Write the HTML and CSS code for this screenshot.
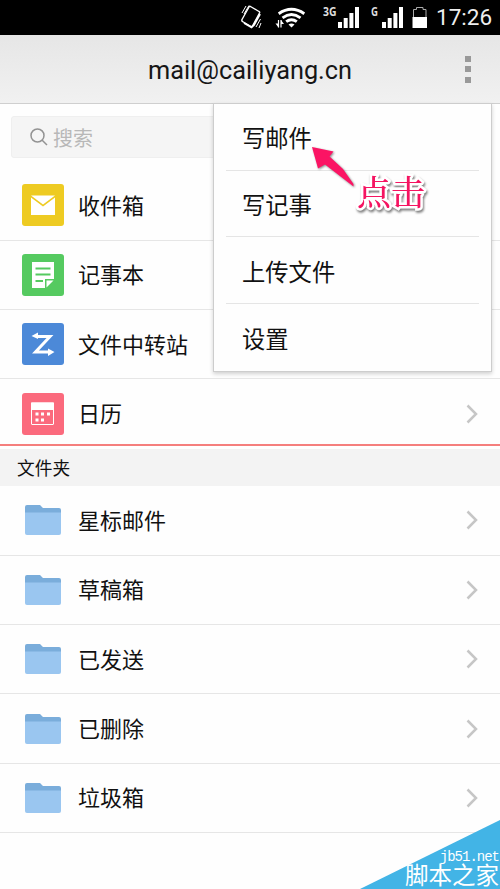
FILE: index.html
```html
<!DOCTYPE html>
<html lang="zh-CN">
<head>
<meta charset="utf-8">
<title>mail@cailiyang.cn</title>
<link rel="stylesheet" href="styles.css">
</head>
<body>
<svg class="defs" width="0" height="0" aria-hidden="true">
  <symbol id="folder" viewBox="0 0 36 30">
    <path d="M0 9V2Q0 0 2 0H15L18 3H34Q36 3 36 5V9Z" fill="#7aaddb"/>
    <path d="M0 7.5H36V28Q36 30 34 30H2Q0 30 0 28Z" fill="#9ac6f0"/>
  </symbol>
  <symbol id="chevron" viewBox="0 0 12 20"><path d="M1.5 1.5L10 10L1.5 18.5" fill="none" stroke="#c6c6c6" stroke-width="2.5"/></symbol>
</svg>
<div class="screen">
  <div class="status">
    <svg class="status-icons" width="200" height="35" viewBox="240 0 200 35">
      <g fill="none" stroke="#fff" stroke-width="1.4">
        <path d="M242 19.5L249 7Q249.500 6 250.500 6.500L259 11.500Q260 12 259.500 13L252.500 26Q252 27 251 26.500L242.500 21.500Q241.500 21 242 19.500Z"/>
        <path d="M244 23L251.500 27.300L254 25L260 14" stroke-width="2"/>
        <path d="M242 13L246 6M244 14L249 5.500M256 27L260.500 19M259 28L261 23" stroke-width="1"/>
      </g>
      <g fill="none" stroke="#fff" stroke-width="2.900">
        <path d="M278.700 13.700Q291.500 5 304.300 13.700M282.500 17.900Q291.500 11.300 300.500 17.900M286.200 21.700Q291.500 17.700 296.800 21.700"/>
      </g>
      <path d="M288.500 24.500Q291.500 22.500 294.500 24.500L291.500 27.500Z" fill="#fff"/>
      <path d="M278.500 27.500V20M281 20V27.500" stroke="#fff" stroke-width="1.200"/>
      <path d="M275.500 23.500H278.500V27.500ZM281 20V24H284Z" fill="#fff"/>
      <g fill="#fff">
        <path d="M338 22h4v6h-4zM343.700 18h4v10h-4zM349.400 13h4v15h-4zM355 7h4v21h-4z"/>
        <path d="M382 22h4v6h-4zM387.700 18h4v10h-4zM393.400 13h4v15h-4zM399 7h4v21h-4z"/>
        <path d="M412.500 17H427V28H412.500z"/>
      </g>
      <path d="M413.500 17V9.500H416.500V7.500H423V9.500H426V17" fill="none" stroke="#aaa"/>
      <text class="net" x="323" y="16" textLength="13.500" lengthAdjust="spacingAndGlyphs">3G</text>
      <text class="net" x="371" y="16" textLength="7" lengthAdjust="spacingAndGlyphs">G</text>
    </svg>
    <span class="clock">17:26</span>
  </div>
  <header class="header">
    <h1 class="account">mail@cailiyang.cn</h1>
    <div class="more"><i></i><i></i><i></i></div>
  </header>
  <main>
    <div class="search">
      <svg width="18" height="18" viewBox="0 0 18 18" fill="none" stroke="#939393" stroke-width="1.500"><circle cx="7.500" cy="7.500" r="6.500"/><path d="M12 12L17 17"/></svg>
      <span>搜索</span>
    </div>
    <div class="row">
      <svg class="tile" viewBox="0 0 42 42"><rect width="42" height="42" rx="3" fill="#eecb22"/><path d="M9 11.500H33L21 20.500Z" fill="#fff"/><path d="M9 13.500L21 22.500L33 13.500V31H9Z" fill="#fff"/></svg>
      <span class="label">收件箱</span><svg class="chevron"><use href="#chevron"/></svg>
    </div>
    <div class="row">
      <svg class="tile" viewBox="0 0 42 42"><rect width="42" height="42" rx="3" fill="#55ca60"/><path d="M10 8H32V25H23V34H10Z" fill="#fff"/><path d="M24.500 26.500H31.500L24.500 33.500Z" fill="#fff"/><path d="M13.500 14.500H28.500M13.500 20.500H28.500M13.500 27H21" stroke="#55ca60" stroke-width="2"/></svg>
      <span class="label">记事本</span><svg class="chevron"><use href="#chevron"/></svg>
    </div>
    <div class="row">
      <svg class="tile" viewBox="0 0 42 42"><rect width="42" height="42" rx="3" fill="#4c89d8"/><path d="M14 13.500H28L13.500 29H28" fill="none" stroke="#fff" stroke-width="3"/><path d="M9.500 13L16 9.500V16ZM32.500 29L26 25.500V33Z" fill="#fff"/></svg>
      <span class="label">文件中转站</span><svg class="chevron"><use href="#chevron"/></svg>
    </div>
    <div class="row row-last">
      <svg class="tile" viewBox="0 0 42 42"><rect width="42" height="42" rx="3" fill="#fb6a7d"/><rect x="9.500" y="10" width="22" height="21.500" rx=".5" fill="none" stroke="#fff"/><path d="M9 9.500H32V17H9Z" fill="#fff"/><path d="M13.500 19.500h3v3h-3zM19 19.500h3v3h-3zM25 19.500h3v3h-3zM13.500 25.500h3v3h-3zM19 25.500h3v3h-3z" fill="#fff"/></svg>
      <span class="label">日历</span><svg class="chevron"><use href="#chevron"/></svg>
    </div>
    <div class="section">文件夹</div>
    <div class="row"><svg class="folder"><use href="#folder"/></svg><span class="label">星标邮件</span><svg class="chevron"><use href="#chevron"/></svg></div>
    <div class="row"><svg class="folder"><use href="#folder"/></svg><span class="label">草稿箱</span><svg class="chevron"><use href="#chevron"/></svg></div>
    <div class="row"><svg class="folder"><use href="#folder"/></svg><span class="label">已发送</span><svg class="chevron"><use href="#chevron"/></svg></div>
    <div class="row"><svg class="folder"><use href="#folder"/></svg><span class="label">已删除</span><svg class="chevron"><use href="#chevron"/></svg></div>
    <div class="row"><svg class="folder"><use href="#folder"/></svg><span class="label">垃圾箱</span><svg class="chevron"><use href="#chevron"/></svg></div>
  </main>
  <div class="menu">
    <div class="menu-item">写邮件</div>
    <div class="menu-item">写记事</div>
    <div class="menu-item">上传文件</div>
    <div class="menu-item">设置</div>
  </div>
  <svg class="arrow" width="44" height="42" viewBox="0 0 44 42"><path d="M1 1L22.500 5.500L18.500 10.500L32 23L42.500 38V40.500L14 18.500L7 22.500Z" fill="#fb1464"/></svg>
  <div class="callout">点击</div>
  <div class="mark">
    <svg width="140" height="69" viewBox="0 0 140 69"><path d="M0 69L140 0V69Z" fill="#42b4e6"/></svg>
    <div class="mark-text"><span class="site">jb51.net</span><span class="name">脚本之家</span></div>
  </div>
</div>
</body>
</html>
```
FILE: styles.css
```css
* { box-sizing: border-box; }
body {
  margin: 0;
  background: #fefefe;
  color: #111;
  font-family: Roboto, "Noto Sans CJK SC", sans-serif;
}
.defs { position: absolute; }
.screen { position: relative; width: 500px; height: 889px; overflow: hidden; }
.status {
  display: flex;
  align-items: center;
  height: 35px;
  padding-left: 240px;
  background: #000;
  color: #eee;
}
.status-icons { flex: none; margin-right: -4px; }
.net { font: bold 12px "Open Sans", sans-serif; fill: #ddd; }
.clock { font-size: 22.5px; line-height: 37px; }
.header {
  display: flex;
  align-items: center;
  justify-content: center;
  position: relative;
  height: 69px;
  border-bottom: 1px solid #cfcfcf;
  background: linear-gradient(#e6e6e6, #f1f1f1);
}
.account { margin: 0; padding-top: 4px; font-size: 25.300px; font-weight: 400; line-height: 64px; color: #161616; }
.more { position: absolute; right: 29px; top: 20.500px; display: grid; gap: 4.500px; }
.more i { width: 6px; height: 6px; background: #999; }
.search {
  display: flex;
  align-items: center;
  gap: 5px;
  height: 42px;
  margin: 12px 11px 13.300px;
  padding-left: 18px;
  border: 1px solid #efefef;
  border-radius: 3px;
  background: #f5f5f5;
  color: #b8b8b8;
  font-size: 20px;
}
.row {
  display: flex;
  align-items: center;
  height: 69.400px;
  padding: 0 22px;
  border-bottom: 1px solid #e6e6e6;
}
.row-last { height: 64.700px; padding-top: 4px; border: 0; }
.tile { width: 42px; height: 42px; margin-right: 14px; }
.folder { width: 36px; height: 30px; margin: 0 17px 0 3px; }
.label { flex: 1; padding-top: 3px; font-size: 22px; line-height: 32px; }
.chevron { width: 12px; height: 20px; }
.section {
  display: flex;
  align-items: center;
  height: 42px;
  padding: 3px 17px 2px;
  border-top: 2px solid #f57f7d;
  background: linear-gradient(#fff 3px, #f3f3f3 3px);
  font-size: 17.700px;
}
.menu {
  position: absolute;
  left: 213px;
  top: 103px;
  width: 279px;
  height: 269px;
  padding: 0 12px;
  border: 1px solid #cdcdcd;
  background: #fefefe;
  box-shadow: 0 2px 4px rgba(0, 0, 0, .18);
}
.menu-item {
  display: flex;
  align-items: center;
  height: 66.700px;
  padding: 1px 0 0 16px;
  border-bottom: 1px solid #e5e5e5;
  font-size: 23.300px;
}
.menu-item:last-child { border: 0; }
.arrow { position: absolute; left: 311px; top: 146px; filter: drop-shadow(1px 1px 1px rgba(0, 0, 0, .45)); }
.callout {
  position: absolute;
  left: 357px;
  top: 167px;
  color: #f51461;
  font: 500 34px/48px "Noto Serif CJK SC", "Noto Sans CJK SC", serif;
  -webkit-text-stroke: 5px #fff;
  paint-order: stroke fill;
  filter: drop-shadow(1px 2px 1px rgba(0, 0, 0, .5));
}
.mark { position: absolute; right: 0; bottom: 0; width: 140px; height: 69px; color: #fff; }
.mark-text {
  position: absolute;
  right: 1px;
  bottom: 0;
  display: flex;
  flex-direction: column;
  align-items: flex-end;
}
.site { font: 14px/14px "Liberation Mono", monospace; letter-spacing: -1px; margin-bottom: 0; }
.name { font-size: 23.500px; line-height: 25px; }
```
